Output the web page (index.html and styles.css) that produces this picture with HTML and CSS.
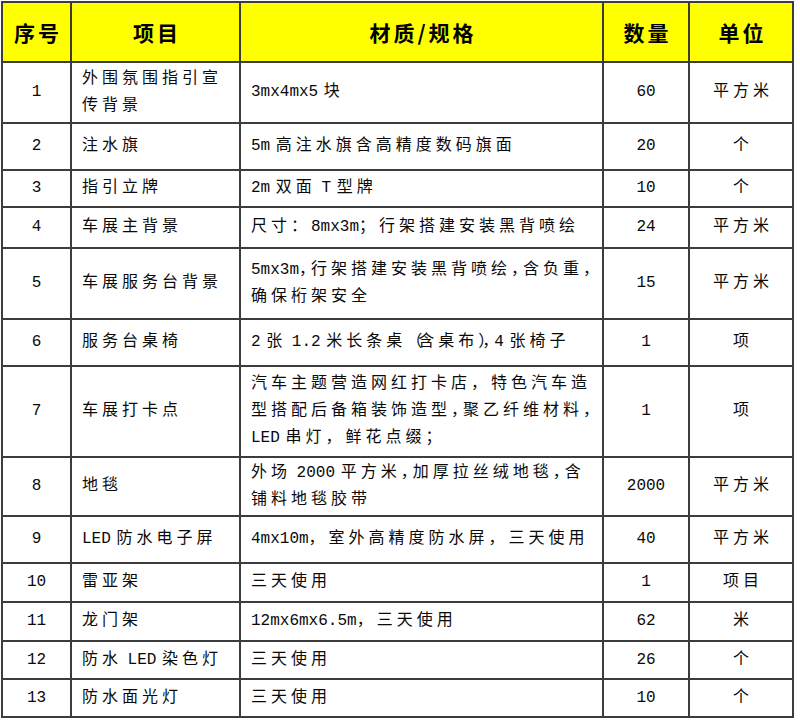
FILE: index.html
```html
<!DOCTYPE html>
<html lang="zh-CN">
<head>
<meta charset="utf-8">
<title>物料清单</title>
<link rel="stylesheet" href="styles.css">
</head>
<body>
<table class="sheet">
  <colgroup>
    <col class="c-no">
    <col class="c-item">
    <col class="c-spec">
    <col class="c-qty">
    <col class="c-unit">
  </colgroup>
  <thead>
    <tr class="head-row">
      <th>序号</th>
      <th>项目</th>
      <th>材质/规格</th>
      <th>数量</th>
      <th>单位</th>
    </tr>
  </thead>
  <tbody>
    <tr>
      <td class="num">1</td>
      <td class="txt">外围氛围指引宣<br>传背景</td>
      <td class="txt"><span class="en">3mx4mx5 </span>块</td>
      <td class="num">60</td>
      <td class="unit">平方米</td>
    </tr>
    <tr>
      <td class="num">2</td>
      <td class="txt">注水旗</td>
      <td class="txt"><span class="en">5m </span>高注水旗含高精度数码旗面</td>
      <td class="num">20</td>
      <td class="unit">个</td>
    </tr>
    <tr>
      <td class="num">3</td>
      <td class="txt">指引立牌</td>
      <td class="txt"><span class="en">2m </span>双面<span class="en"> T </span>型牌</td>
      <td class="num">10</td>
      <td class="unit">个</td>
    </tr>
    <tr>
      <td class="num">4</td>
      <td class="txt">车展主背景</td>
      <td class="txt">尺寸：<span class="en">8mx3m</span>；行架搭建安装黑背喷绘</td>
      <td class="num">24</td>
      <td class="unit">平方米</td>
    </tr>
    <tr>
      <td class="num">5</td>
      <td class="txt">车展服务台背景</td>
      <td class="txt"><span class="en">5mx3m</span><span class="p">，</span>行架搭建安装黑背喷绘<span class="p">，</span>含负重<span class="p">，</span><br>确保桁架安全</td>
      <td class="num">15</td>
      <td class="unit">平方米</td>
    </tr>
    <tr>
      <td class="num">6</td>
      <td class="txt">服务台桌椅</td>
      <td class="txt"><span class="en">2 </span>张<span class="en"> 1.2 </span>米长条桌<span class="p">（</span>含桌布<span class="p">）</span><span class="p">，</span><span class="en">4 </span>张椅子</td>
      <td class="num">1</td>
      <td class="unit">项</td>
    </tr>
    <tr>
      <td class="num">7</td>
      <td class="txt">车展打卡点</td>
      <td class="txt">汽车主题营造网红打卡店，特色汽车造<br>型搭配后备箱装饰造型<span class="p">，</span>聚乙纤维材料<span class="p">，</span><br><span class="en">LED </span>串灯，鲜花点缀；</td>
      <td class="num">1</td>
      <td class="unit">项</td>
    </tr>
    <tr>
      <td class="num">8</td>
      <td class="txt">地毯</td>
      <td class="txt">外场<span class="en"> 2000 </span>平方米<span class="p">，</span>加厚拉丝绒地毯<span class="p">，</span>含<br>铺料地毯胶带</td>
      <td class="num">2000</td>
      <td class="unit">平方米</td>
    </tr>
    <tr>
      <td class="num">9</td>
      <td class="txt"><span class="en">LED </span>防水电子屏</td>
      <td class="txt"><span class="en">4mx10m</span>，室外高精度防水屏，三天使用</td>
      <td class="num">40</td>
      <td class="unit">平方米</td>
    </tr>
    <tr>
      <td class="num">10</td>
      <td class="txt">雷亚架</td>
      <td class="txt">三天使用</td>
      <td class="num">1</td>
      <td class="unit">项目</td>
    </tr>
    <tr>
      <td class="num">11</td>
      <td class="txt">龙门架</td>
      <td class="txt"><span class="en">12mx6mx6.5m</span>，三天使用</td>
      <td class="num">62</td>
      <td class="unit">米</td>
    </tr>
    <tr>
      <td class="num">12</td>
      <td class="txt">防水<span class="en"> LED </span>染色灯</td>
      <td class="txt">三天使用</td>
      <td class="num">26</td>
      <td class="unit">个</td>
    </tr>
    <tr>
      <td class="num">13</td>
      <td class="txt">防水面光灯</td>
      <td class="txt">三天使用</td>
      <td class="num">10</td>
      <td class="unit">个</td>
    </tr>
  </tbody>
</table>
</body>
</html>
```

FILE: styles.css
```css
html, body {
  margin: 0;
  padding: 0;
  background: #ffffff;
}

body {
  padding: 1px 0 0 1px;
}

.sheet {
  border-collapse: collapse;
  table-layout: fixed;
  width: 793px;
  font-family: "Liberation Mono", "Noto Sans CJK SC", monospace;
  font-size: 16px;
  color: #0a0a0a;
}

.c-no { width: 69px; }
.c-item { width: 169px; }
.c-spec { width: 363px; }
.c-qty { width: 86px; }
.c-unit { width: 104px; }

.sheet th,
.sheet td {
  border: 2px solid #3c3c3c;
  padding: 0;
  vertical-align: middle;
  line-height: 27px;
  white-space: nowrap;
  overflow: hidden;
}

.sheet th {
  background: #ffff00;
  font-family: "Noto Sans CJK SC", sans-serif;
  font-weight: 700;
  font-size: 21px;
  letter-spacing: 3px;
  padding-left: 3px;
  color: #000000;
  text-align: center;
}

.head-row { height: 60px; }

.txt {
  text-align: left;
  padding-left: 10px !important;
  letter-spacing: 4px;
}

.num {
  text-align: center;
  letter-spacing: 0;
}

.unit {
  text-align: center;
  letter-spacing: 4px;
  padding-left: 4px !important;
}

.en {
  letter-spacing: 0;
  word-spacing: -4px;
}

.p { letter-spacing: -4px; }

tbody tr:nth-child(1) { height: 61px; }
tbody tr:nth-child(2) { height: 47px; }
tbody tr:nth-child(3) { height: 37px; }
tbody tr:nth-child(4) { height: 41px; }
tbody tr:nth-child(5) { height: 71px; }
tbody tr:nth-child(6) { height: 47px; }
tbody tr:nth-child(7) { height: 91px; }
tbody tr:nth-child(8) { height: 59px; }
tbody tr:nth-child(9) { height: 47px; }
tbody tr:nth-child(10) { height: 39px; }
tbody tr:nth-child(11) { height: 39px; }
tbody tr:nth-child(12) { height: 38px; }
tbody tr:nth-child(13) { height: 38px; }
```
